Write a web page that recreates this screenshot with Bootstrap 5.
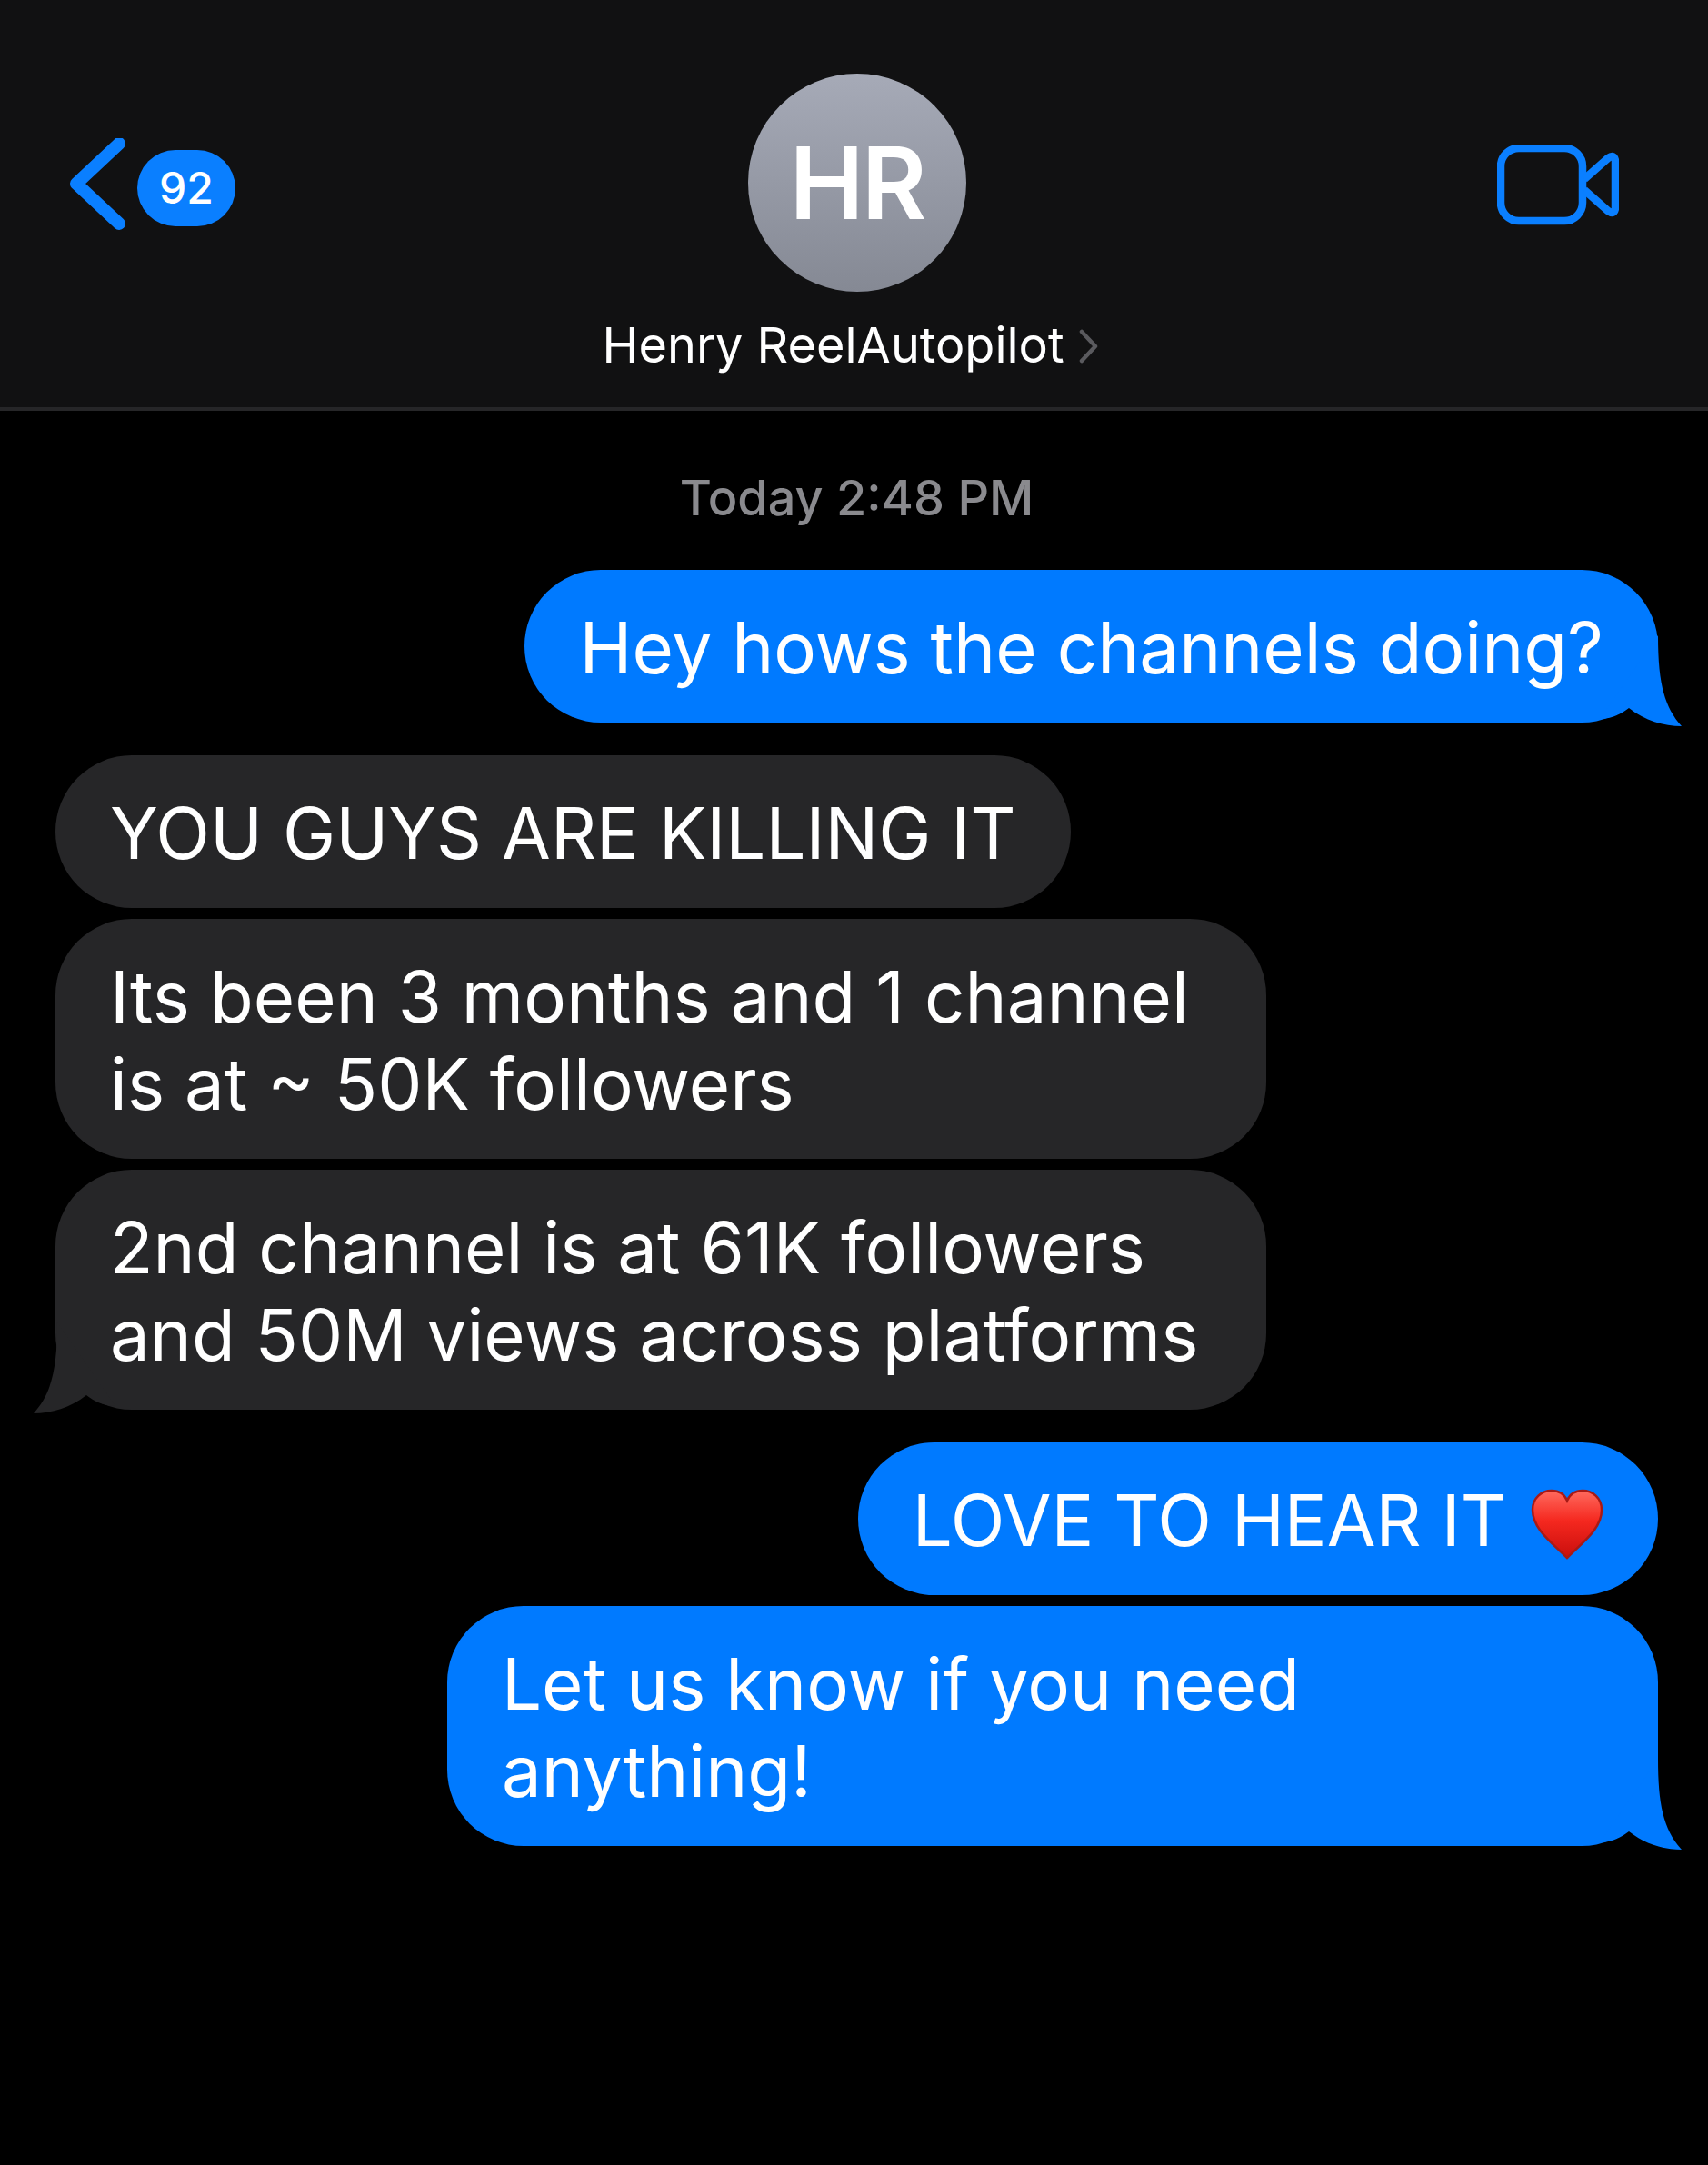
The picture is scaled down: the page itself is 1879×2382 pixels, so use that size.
<!DOCTYPE html>
<html lang="en">
<head>
<meta charset="utf-8">
<title>Messages</title>
<link rel="stylesheet" href="https://cdn.jsdelivr.net/npm/bootstrap@5.3.0/dist/css/bootstrap.min.css">
<style>
html,body{background:#000;margin:0}
body{font-family:Inter,"Liberation Sans",sans-serif;color:#fff;min-height:2382px}
.topbar{height:452px;background:#111112;border-bottom:4px solid #262628;padding:0 98px 0 76px}
.backlink{margin-top:152px;width:190px}
.chev{width:72px;height:112px;flex:none;margin-right:3px}
.count{width:108px;height:84px;background:#0a7fff;border-radius:42px;font-size:48px;line-height:84px;text-align:center;font-weight:500;margin-top:13px}
.who{position:absolute;left:6px;right:0;top:81px}
.face{width:240px;height:240px;border-radius:50%;background:linear-gradient(#a6aab7,#858994);font-size:110px;font-weight:600;line-height:240px;text-align:center;letter-spacing:-3px}
.fullname{font-size:54px;line-height:66px;margin-top:26px;margin-right:14px}
.fullname svg{width:22px;height:38px;margin-left:16px;vertical-align:-1px}
.stamp{font-size:54px;line-height:64px;color:#8a8a8e;font-weight:500;margin:64px 0 0;text-align:center;padding-left:6px}
.thread{padding:47px 55px 0 61px}
.bub{position:relative;max-width:1332px;font-size:78px;line-height:96px;padding:38px 60px 34px;border-radius:84px;width:fit-content}
.mine{background:#007aff;align-self:flex-end}
.theirs{background:#262628;align-self:flex-start}
.tail{position:absolute;bottom:-4px;width:90px;height:100px}
.tail-r{right:-26px}
.tail-l{left:-24px;transform:scaleX(-1)}
.hrt{width:80px;height:78px;vertical-align:-15px;margin-left:27px}
.gap-s{margin-top:12px}
.gap-l{margin-top:36px}
.cam{margin-top:159px;flex:none}
</style>
</head>
<body>
<header class="topbar d-flex justify-content-between position-relative">
  <div class="backlink d-flex align-items-start">
    <svg class="chev" viewBox="0 0 72 112"><path d="M55 6 8 50l47 44" fill="none" stroke="#0a7fff" stroke-width="14" stroke-linecap="round" stroke-linejoin="round"/></svg>
    <div class="count">92</div>
  </div>
  <div class="who d-flex flex-column align-items-center">
    <div class="face">HR</div>
    <div class="fullname">Henry ReelAutopilot<svg viewBox="0 0 22 38"><path d="M3 3l15 16L3 35" fill="none" stroke="#5a5a5e" stroke-width="4.5" stroke-linecap="round" stroke-linejoin="round"/></svg></div>
  </div>
  <svg class="cam" width="134" height="92" viewBox="0 0 134 92">
    <rect x="4" y="4" width="90" height="80" rx="20" fill="none" stroke="#0a7fff" stroke-width="8.5"/>
    <path d="M96 38 122 15q7-5 8 3v52q-1 8-8 3L96 50" fill="none" stroke="#0a7fff" stroke-width="8.5" stroke-linejoin="round"/>
  </svg>
</header>
<main>
  <p class="stamp">Today 2:48 PM</p>
  <div class="thread d-flex flex-column">
    <div class="bub mine">Hey hows the channels doing?<svg class="tail tail-r" viewBox="0 0 90 100"><path d="M0 92 64 0c0 50 6 78 26 100-20 0-40-6-58-20-8 6-18 12-32 12z" fill="#007aff"/></svg></div>
    <div class="bub theirs gap-l">YOU GUYS ARE KILLING IT</div>
    <div class="bub theirs gap-s">Its been 3 months and 1 channel is at ~ 50K followers</div>
    <div class="bub theirs gap-s">2nd channel is at 61K followers and 50M views across platforms<svg class="tail tail-l" viewBox="0 0 90 100"><path d="M0 92 64 0c0 50 6 78 26 100-20 0-40-6-58-20-8 6-18 12-32 12z" fill="#262628"/></svg></div>
    <div class="bub mine gap-l">LOVE TO HEAR IT<svg class="hrt" viewBox="0 0 80 78"><defs><linearGradient id="hg" x1="0" y1="0" x2="0" y2="1"><stop offset="0" stop-color="#ff6a5e"/><stop offset=".45" stop-color="#f5281f"/><stop offset="1" stop-color="#c90e0c"/></linearGradient></defs><path d="M40 76C22 58 2 44 2 23 2 10 12 2 23 2c8 0 14 4 17 11C43 6 49 2 57 2c11 0 21 8 21 21 0 21-20 35-38 53z" fill="url(#hg)" stroke="#a81a16" stroke-width="2.5"/></svg></div>
    <div class="bub mine gap-s">Let us know if you need anything!<svg class="tail tail-r" viewBox="0 0 90 100"><path d="M0 92 64 0c0 50 6 78 26 100-20 0-40-6-58-20-8 6-18 12-32 12z" fill="#007aff"/></svg></div>
  </div>
</main>
<script src="https://cdn.jsdelivr.net/npm/bootstrap@5.3.0/dist/js/bootstrap.bundle.min.js"></script>
</body>
</html>
